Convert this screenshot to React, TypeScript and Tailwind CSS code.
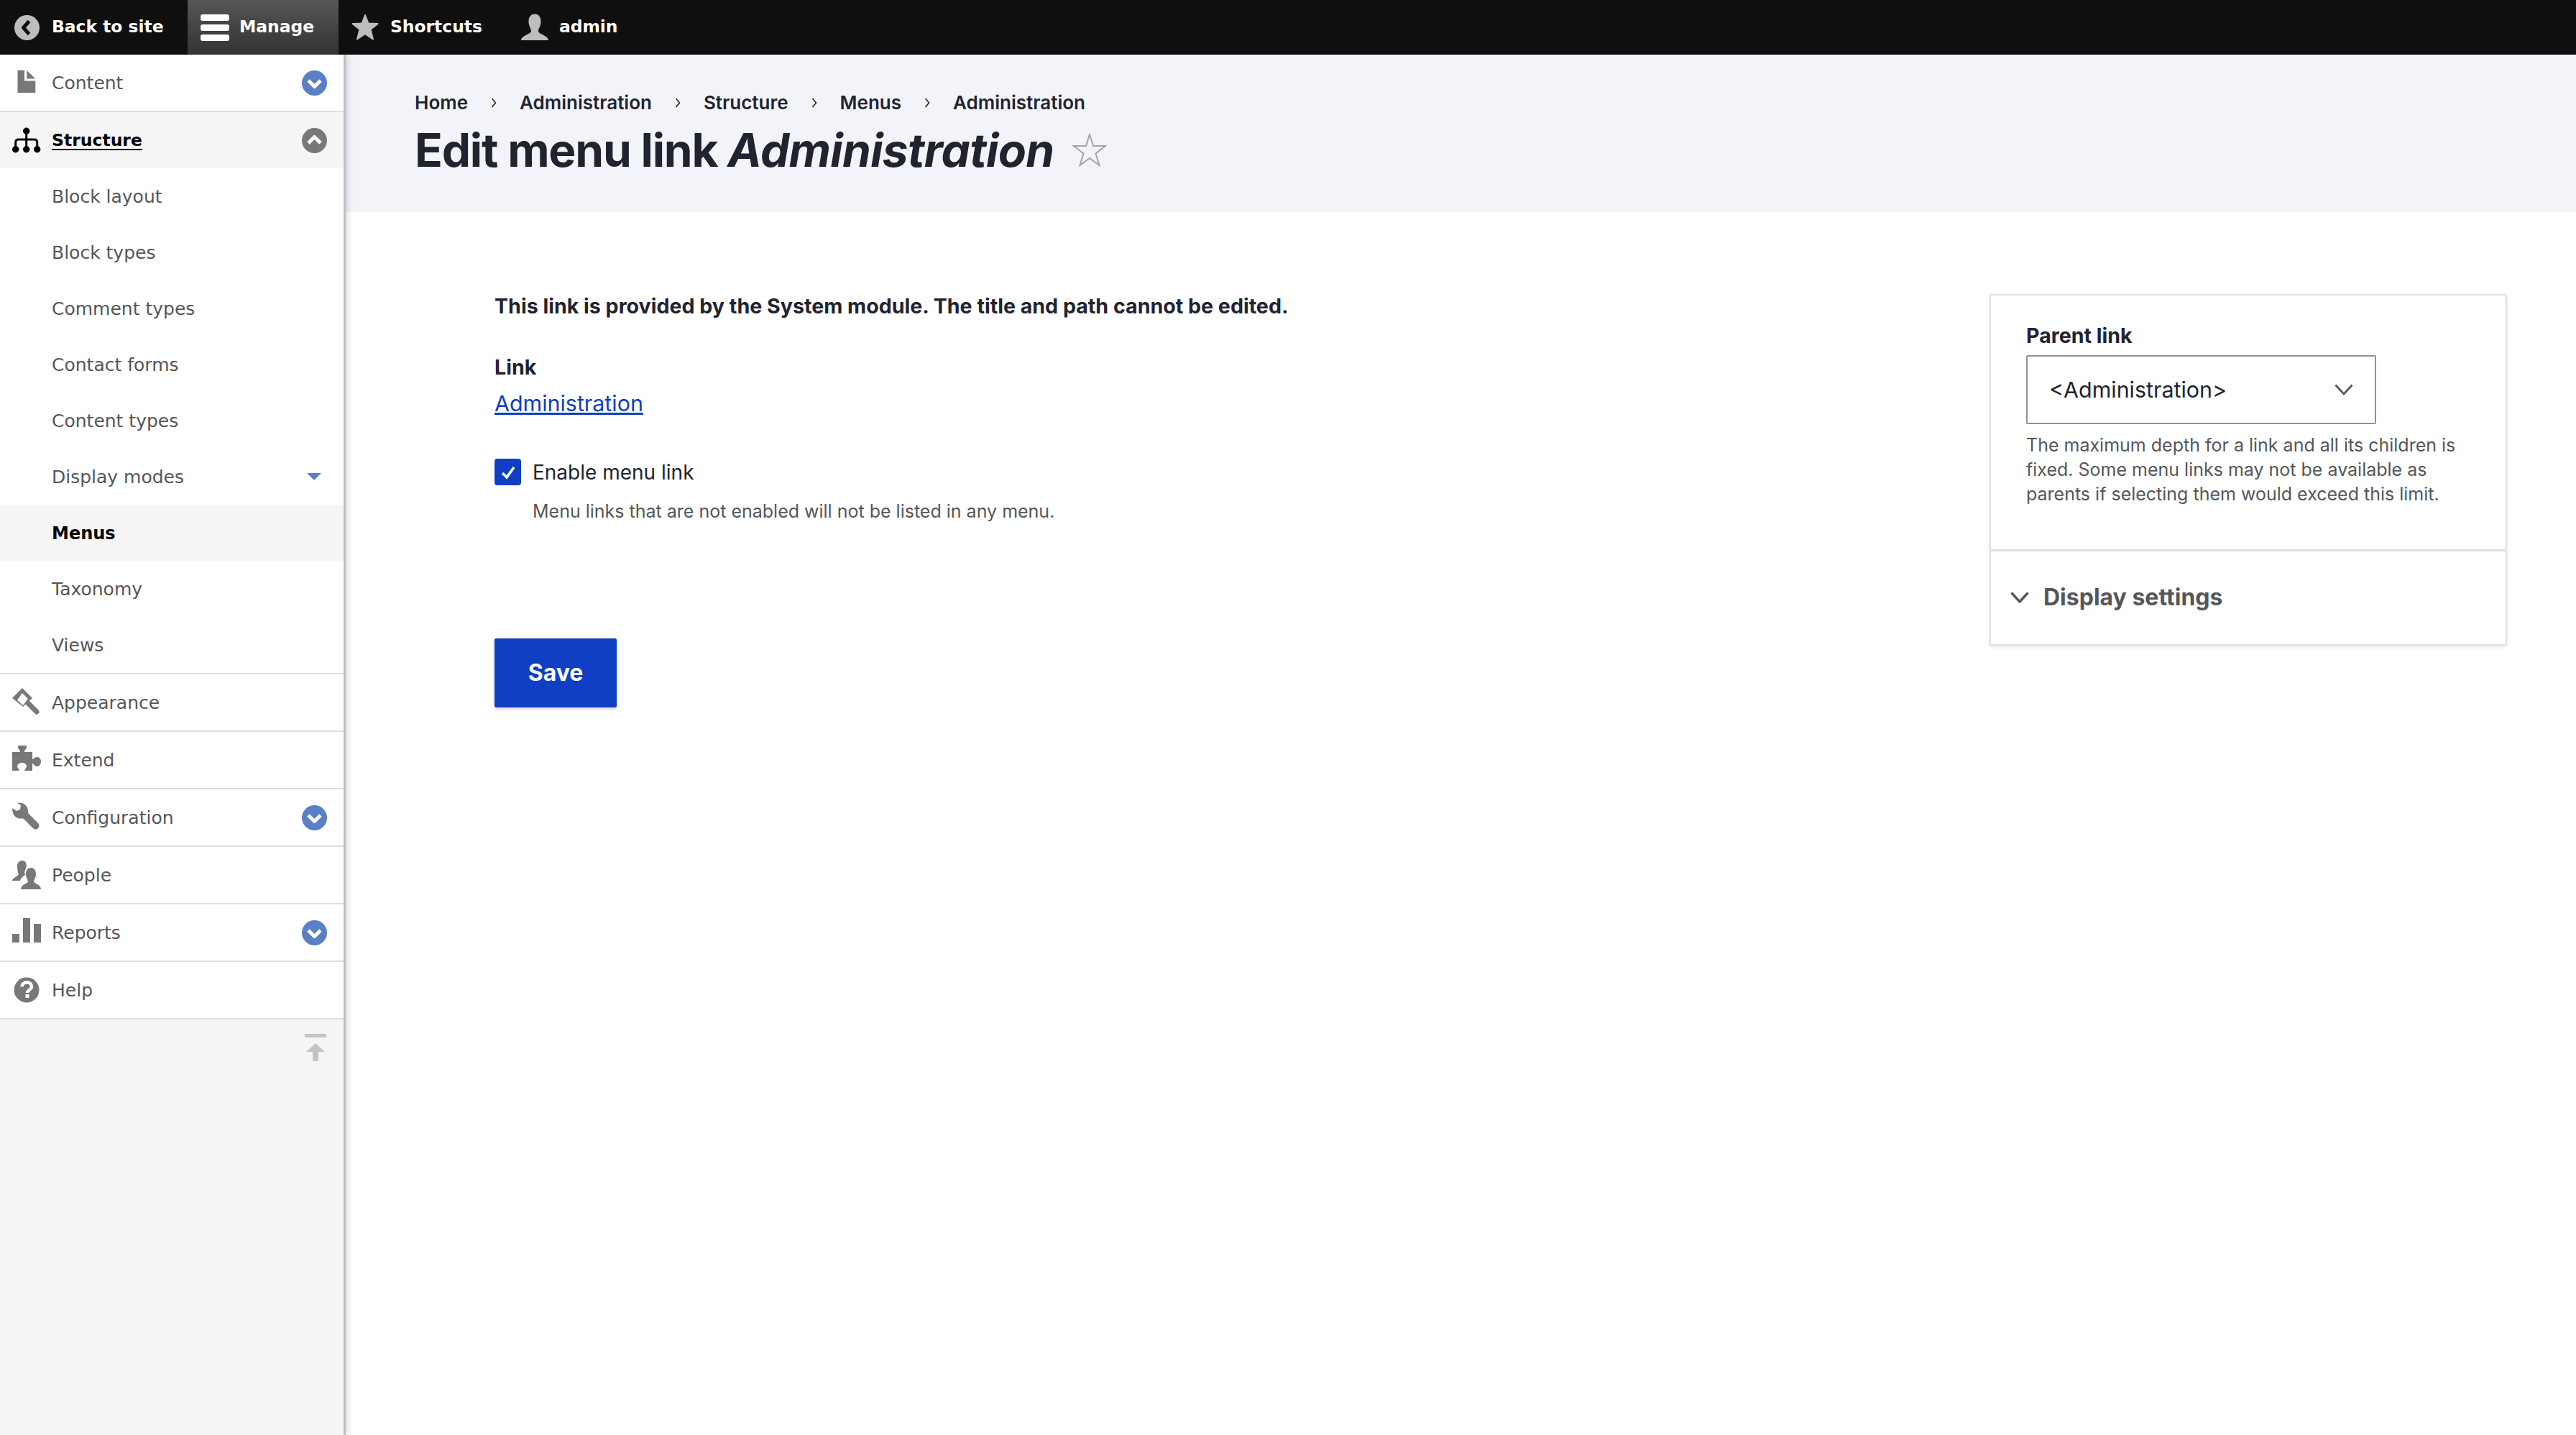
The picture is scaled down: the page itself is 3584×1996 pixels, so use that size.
import type { ReactNode } from 'react';

function BackIcon() {
  return (
    <svg viewBox="0 0 35 35" className="w-[35px] h-[35px]">
      <circle cx="17.5" cy="17.5" r="17.5" fill="#bdbdbd" />
      <path d="M20.5 8.5 L12.5 17.5 L20.5 26.5" fill="none" stroke="#0f0f0f" strokeWidth="5" strokeLinejoin="round" />
    </svg>
  );
}

function StarIcon() {
  return (
    <svg viewBox="0 0 38 38" className="w-[38px] h-[38px]">
      <path
        d="M19 2 L23.5 13.5 L36.5 14 L26.5 22 L30 35.5 L19 28 L8 35.5 L11.5 22 L1.5 14 L14.5 13.5 Z"
        fill="#bdbdbd"
        stroke="#bdbdbd"
        strokeWidth="2"
        strokeLinejoin="round"
      />
    </svg>
  );
}

function UserIcon() {
  return (
    <svg viewBox="0 0 38 38" className="w-[38px] h-[38px]">
      <path d="M19 0.5 C24.5 0.5 28 5 27.5 12 C27 18 24 21 24 24 C24 29 38 30 38 37 L0 37 C0 30 14 29 14 24 C14 21 11 18 10.5 12 C10 5 13.5 0.5 19 0.5 Z" fill="#bdbdbd" />
    </svg>
  );
}

function RowIcon({ box = '0 0 60 60', children }: { box?: string; children: ReactNode }) {
  return (
    <svg viewBox={box} className="w-[60px] h-[60px]">
      {children}
    </svg>
  );
}

function FileIcon() {
  return (
    <RowIcon>
      <path d="M14.5 12.7 H24 V27.5 H39.3 V44 H14.5 Z" fill="#787878" />
      <path d="M27.3 13 L39.3 24.5 H27.3 Z" fill="#787878" />
    </RowIcon>
  );
}

function StructureIcon() {
  return (
    <RowIcon>
      <circle cx="26.7" cy="17.3" r="4.7" fill="#000" />
      <circle cx="11.7" cy="42.7" r="4.7" fill="#000" />
      <circle cx="26.7" cy="42.7" r="4.7" fill="#000" />
      <circle cx="41.7" cy="42.7" r="4.7" fill="#000" />
      <path d="M26.7 17 V42 M11.7 42 V33 Q11.7 29 15.7 29 H37.7 Q41.7 29 41.7 33 V42" fill="none" stroke="#000" strokeWidth="3" />
    </RowIcon>
  );
}

function BrushIcon() {
  return (
    <RowIcon box="0 -3 60 60">
      <path d="M21 7 L35 21 L22 33 L7 21 Z" fill="#787878" />
      <path d="M14 24 L21 14 L29 22 L22 31 Z" fill="#fff" />
      <path d="M29 28 L41 40" fill="none" stroke="#787878" strokeWidth="7" strokeLinecap="round" />
    </RowIcon>
  );
}

function PuzzleIcon() {
  return (
    <RowIcon box="0 -3 60 60">
      <path
        d="M7 16 H18 C18 13 15 12 15 9 C15 7 16 7 21 7 C26 7 27 7 27 9 C27 12 24 13 24 16 H35 V26 C37 26 38 23 41 23 C45 23 47 26 47 29 C47 33 45 36 41 36 C38 36 37 32 35 32 V42 H24 C24 40 27 38 27 36 C27 33 24 31 21 31 C18 31 14 33 14 36 C14 38 17 40 17 42 H7 Z"
        fill="#787878"
      />
    </RowIcon>
  );
}

function WrenchIcon() {
  return (
    <RowIcon box="0 -3 60 60">
      <path
        d="M7.5 14 L13 18 L18 16 L19 10 L14 7 C20 5 28 9 29 17 C29.5 20 29 21 30 22 L43 35 C45 37 45 40 43 42 C41 44 38 44 36 42 L23 29 C22 28 21 28.5 18 28.5 C11 28.5 6 21 7.5 14 Z"
        fill="#787878"
      />
    </RowIcon>
  );
}

function PeopleIcon() {
  return (
    <RowIcon box="0 -3 60 60">
      <path d="M21 7 C26 7 27.5 12 26.5 16 C25.5 20 24 22 24 24 L25.5 26.5 C22 29 19 31 18 35 H7 C7 31 15 29 16 26 C15 24 14 20 14 15 C14 10 17 7 21 7 Z" fill="#787878" />
      <path d="M33 17 C38 17 40 21 40 26 C40 31 37 34 37 36 C37 39 47 40 47 47 H19 C19 40 29 39 29 36 C29 34 26 31 26 26 C26 21 28 17 33 17 Z" fill="#787878" />
    </RowIcon>
  );
}

function ReportsIcon() {
  return (
    <RowIcon>
      <rect x="7" y="32" width="10" height="12" fill="#787878" />
      <rect x="22" y="10" width="10" height="34" fill="#787878" />
      <rect x="37" y="18" width="10" height="26" fill="#787878" />
    </RowIcon>
  );
}

function HelpIcon() {
  return (
    <RowIcon>
      <circle cx="27" cy="30" r="17.5" fill="#787878" />
      <path d="M20.5 25.5 C20.5 21.5 23.5 19.5 27.5 19.5 C31.5 19.5 34 22 34 25.5 C34 29.5 28 30 28 34" fill="none" stroke="#fff" strokeWidth="4.5" />
      <rect x="25.5" y="36" width="5" height="5" fill="#fff" />
    </RowIcon>
  );
}

function CircleArrow({ up = false }: { up?: boolean }) {
  return (
    <svg viewBox="0 0 35 35" className="w-[35px] h-[35px]">
      <circle cx="17.5" cy="17.5" r="17.5" fill={up ? '#787878' : '#5a7fc4'} />
      <path
        d={up ? 'M9 21 L17.5 12.5 L26 21' : 'M9 14 L17.5 22.5 L26 14'}
        fill="none"
        stroke="#fff"
        strokeWidth="5"
        strokeLinejoin="round"
      />
    </svg>
  );
}

function ToolbarItem({ icon, label, active, className }: { icon: ReactNode; label: string; active?: boolean; className: string }) {
  return (
    <div
      className={`h-[76px] flex items-center font-bold text-white text-[23.4px] ${className} ${
        active ? 'bg-gradient-to-b from-[#565656] to-[#333333]' : ''
      }`}
    >
      {icon}
      <span>{label}</span>
    </div>
  );
}

function Toolbar() {
  return (
    <div className="h-[76px] bg-[#0f0f0f] flex items-center font-['DejaVu_Sans',sans-serif] relative z-20">
      <ToolbarItem className="w-[261px] pl-[20px] gap-[17px]" icon={<BackIcon />} label="Back to site" />
      <ToolbarItem
        className="w-[210px] pl-[18px] gap-[14px]"
        active
        icon={
          <div className="w-[40px] flex flex-col gap-[5px]">
            <div className="h-[9px] rounded-[3px] bg-white" />
            <div className="h-[9px] rounded-[3px] bg-white" />
            <div className="h-[9px] rounded-[3px] bg-white" />
          </div>
        }
        label="Manage"
      />
      <ToolbarItem className="pl-[18px] gap-[16px]" icon={<StarIcon />} label="Shortcuts" />
      <ToolbarItem className="pl-[54px] gap-[15px]" icon={<UserIcon />} label="admin" />
    </div>
  );
}

function MainItem({ icon, label, arrow, open }: { icon: ReactNode; label: string; arrow?: boolean; open?: boolean }) {
  return (
    <div
      className={`h-[80px] border-b-2 border-[#dedede] flex items-center pr-[23px] ${
        open ? 'bg-[#f5f5f5] text-black' : 'bg-white text-[#565656]'
      }`}
    >
      <div className="w-[72px] pl-[10px] shrink-0">{icon}</div>
      <span className={`pt-[2px] ${open ? 'underline underline-offset-[4px] text-[23.5px] font-bold' : ''}`}>{label}</span>
      {arrow && (
        <div className="ml-auto">
          <CircleArrow up={open} />
        </div>
      )}
    </div>
  );
}

function SubItem({ label, active, caret }: { label: string; active?: boolean; caret?: boolean }) {
  return (
    <div
      className={`h-[78px] flex items-center pl-[72px] pr-[31px] ${
        active ? 'bg-[#f5f5f5] text-black font-bold text-[24px]' : 'bg-white text-[#565656]'
      }`}
    >
      <span className="pt-[2px]">{label}</span>
      {caret && <div className="ml-auto w-0 h-0 border-x-[10px] border-x-transparent border-t-[10px] border-t-[#5a7fc4]" />}
    </div>
  );
}

function Sidebar() {
  return (
    <aside className="w-[481px] shrink-0 flex flex-col bg-[#f5f5f5] border-r-[3px] border-[#bfbfbf] shadow-[0_0_10px_rgba(0,0,0,0.25)] relative z-10 font-['DejaVu_Sans',sans-serif] text-[25px]">
      <MainItem icon={<FileIcon />} label="Content" arrow />
      <div className="-mb-[2px]">
        <MainItem icon={<StructureIcon />} label="Structure" arrow open />
      </div>
      <div className="border-b-2 border-[#dedede]">
        <SubItem label="Block layout" />
        <SubItem label="Block types" />
        <SubItem label="Comment types" />
        <SubItem label="Contact forms" />
        <SubItem label="Content types" />
        <SubItem label="Display modes" caret />
        <SubItem label="Menus" active />
        <SubItem label="Taxonomy" />
        <SubItem label="Views" />
      </div>
      <MainItem icon={<BrushIcon />} label="Appearance" />
      <MainItem icon={<PuzzleIcon />} label="Extend" />
      <MainItem icon={<WrenchIcon />} label="Configuration" arrow />
      <MainItem icon={<PeopleIcon />} label="People" />
      <MainItem icon={<ReportsIcon />} label="Reports" arrow />
      <MainItem icon={<HelpIcon />} label="Help" />
      <div className="flex-1 flex justify-end pt-[20px] pr-[24px]">
        <svg viewBox="0 0 30 38" className="w-[30px] h-[38px]">
          <rect x="0" y="0" width="30" height="5" fill="#c4c4c4" />
          <path d="M15 13 L28 25 H19 V38 H11 V25 H2 Z" fill="#c4c4c4" />
        </svg>
      </div>
    </aside>
  );
}

function Breadcrumb() {
  const items = ['Home', 'Administration', 'Structure', 'Menus', 'Administration'];
  return (
    <div className="flex items-center text-[26px] font-semibold text-[#222330] leading-[32px]">
      {items.map((item, i) => (
        <div key={i} className="flex items-center">
          {i > 0 && (
            <svg viewBox="0 0 8 14" className="w-[8px] h-[14px] mx-[32px]">
              <path d="M1.5 1 L6.5 7 L1.5 13" fill="none" stroke="#222330" strokeWidth="1.6" />
            </svg>
          )}
          <span>{item}</span>
        </div>
      ))}
    </div>
  );
}

function Panel() {
  return (
    <div className="w-[720px] h-[489px] shrink-0 mt-[114px] bg-white border-2 border-[#dedfe4] rounded-[2px] shadow-[0_2px_6px_rgba(0,0,0,0.1)]">
      <div className="h-[356px] border-b-[3px] border-[#dedfe4] pt-[38px] px-[49px]">
        <div className="text-[28.6px] font-bold text-[#222330] leading-[36px]">Parent link</div>
        <div className="mt-[9px] w-[487px] h-[96px] border-2 border-[#8e929c] rounded-[2px] flex items-center justify-between pl-[30px] pr-[30px] text-[30.4px] text-[#222330]">
          <span className="pt-[1px]">&lt;Administration&gt;</span>
          <svg viewBox="0 0 26 16" className="w-[26px] h-[16px]">
            <path d="M1.5 1.5 L13 14 L24.5 1.5" fill="none" stroke="#55565b" strokeWidth="2.6" />
          </svg>
        </div>
        <p className="mt-[12px] text-[25px] leading-[34px] text-[#55565b] w-[620px]">
          The maximum depth for a link and all its children is fixed. Some menu links may not be available as parents if selecting them would exceed this limit.
        </p>
      </div>
      <div className="h-[128px] flex items-center pl-[27px] gap-[20px] text-[32px] font-bold text-[#55565b]">
        <svg viewBox="0 0 26 16" className="w-[26px] h-[16px]">
          <path d="M1.5 1.5 L13 14 L24.5 1.5" fill="none" stroke="#55565b" strokeWidth="3.4" />
        </svg>
        <span>Display settings</span>
      </div>
    </div>
  );
}

export default function App() {
  return (
    <div className="min-h-screen flex flex-col bg-white font-['Inter',sans-serif]">
      <Toolbar />
      <div className="flex flex-1">
        <Sidebar />
        <main className="flex-1 flex flex-col">
          <header className="h-[219px] bg-[#f3f4f9] pl-[96px] pt-[51px]">
            <Breadcrumb />
            <div className="mt-[10px] flex items-center gap-[26px]">
              <h1 className="text-[64px] leading-[80px] font-bold tracking-[-1.2px] text-[#222330]">
                Edit menu link <em className="tracking-[-0.7px]">Administration</em>
              </h1>
              <svg viewBox="0 0 48 48" className="w-[48px] h-[48px]">
                <path d="M24 2 L29 18 L46 18 L32.5 28.5 L37.5 45 L24 35 L10.5 45 L15.5 28.5 L2 18 L19 18 Z" fill="none" stroke="#a3a5ad" strokeWidth="2" />
              </svg>
            </div>
          </header>
          <div className="flex justify-between pl-[207px] pr-[96px]">
            <div>
              <p className="mt-[113px] text-[28.6px] leading-[36px] font-bold text-[#222330]">
                This link is provided by the System module. The title and path cannot be edited.
              </p>
              <div className="mt-[49px] text-[28.6px] leading-[36px] font-bold text-[#222330]">Link</div>
              <a className="block mt-[12px] w-fit text-[30.4px] leading-[40px] text-[#0f3fc4] underline">Administration</a>
              <div className="mt-[54px] flex items-center gap-[16px]">
                <div className="w-[37px] h-[37px] rounded-[4px] bg-[#113fc4] flex items-center justify-center">
                  <svg viewBox="0 0 24 24" className="w-[24px] h-[24px]">
                    <path d="M4 13 L10 19 L20 5" fill="none" stroke="#fff" strokeWidth="3.6" />
                  </svg>
                </div>
                <span className="text-[28px] text-[#222330] pt-[1px]">Enable menu link</span>
              </div>
              <p className="mt-[15px] ml-[53px] text-[25px] leading-[36px] text-[#55565b]">
                Menu links that are not enabled will not be listed in any menu.
              </p>
              <button className="mt-[159px] w-[170px] h-[96px] rounded-[2px] bg-[#113fc4] text-white text-[32px] font-bold shadow-[0_2px_4px_rgba(0,0,0,0.2)]">
                Save
              </button>
            </div>
            <Panel />
          </div>
        </main>
      </div>
    </div>
  );
}
